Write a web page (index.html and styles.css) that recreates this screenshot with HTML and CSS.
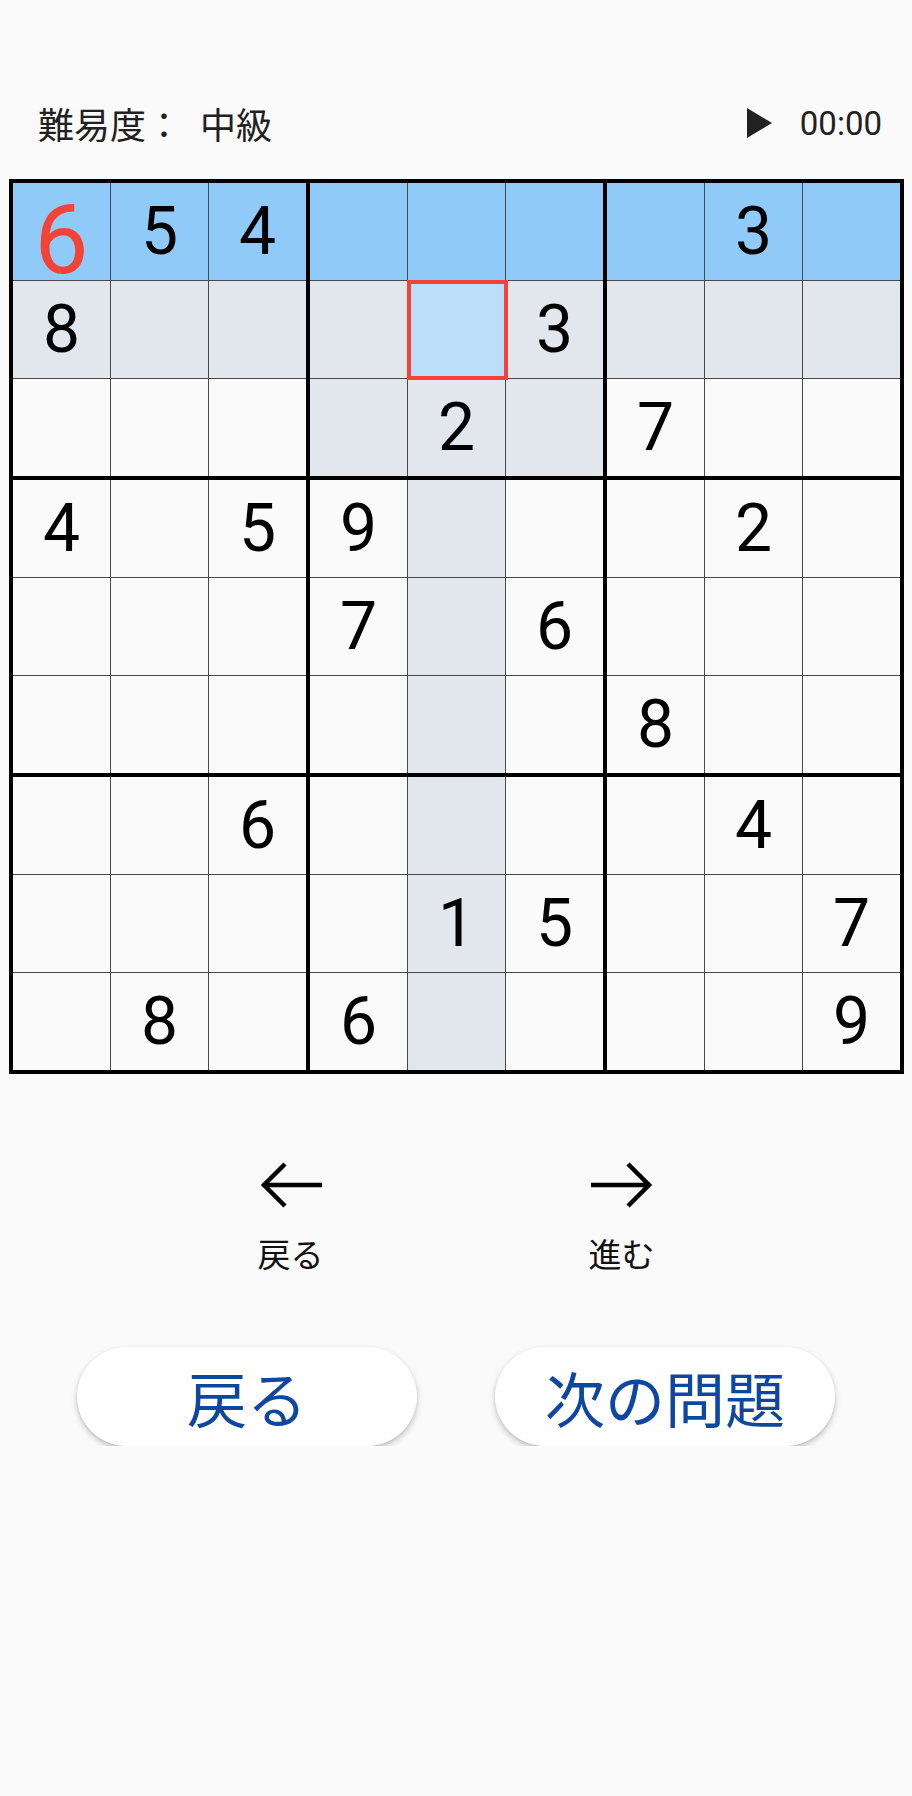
FILE: index.html
```html
<!DOCTYPE html>
<html lang="ja">
<head>
<meta charset="utf-8">
<title>数独</title>
<link rel="stylesheet" href="styles.css">
</head>
<body>
<div class="page">
  <header class="header">
    <div class="level"><span class="level-label">難易度：</span><span class="level-value">中級</span></div>
    <div class="timer">
      <svg class="play" width="25" height="30" viewBox="0 0 25 30"><polygon points="0,0 25,15 0,30" fill="#212121"/></svg>
      <span>00:00</span>
    </div>
  </header>

  <div class="board">
    <div class="box">
      <div class="cell blue"><span class="given-red">6</span></div>
      <div class="cell blue">5</div>
      <div class="cell blue">4</div>
      <div class="cell gray">8</div>
      <div class="cell gray"></div>
      <div class="cell gray"></div>
      <div class="cell"></div>
      <div class="cell"></div>
      <div class="cell"></div>
    </div>
    <div class="box">
      <div class="cell blue"></div>
      <div class="cell blue"></div>
      <div class="cell blue"></div>
      <div class="cell gray"></div>
      <div class="cell selected"></div>
      <div class="cell gray">3</div>
      <div class="cell gray"></div>
      <div class="cell gray">2</div>
      <div class="cell gray"></div>
    </div>
    <div class="box">
      <div class="cell blue"></div>
      <div class="cell blue">3</div>
      <div class="cell blue"></div>
      <div class="cell gray"></div>
      <div class="cell gray"></div>
      <div class="cell gray"></div>
      <div class="cell">7</div>
      <div class="cell"></div>
      <div class="cell"></div>
    </div>

    <div class="box">
      <div class="cell">4</div>
      <div class="cell"></div>
      <div class="cell">5</div>
      <div class="cell"></div>
      <div class="cell"></div>
      <div class="cell"></div>
      <div class="cell"></div>
      <div class="cell"></div>
      <div class="cell"></div>
    </div>
    <div class="box">
      <div class="cell">9</div>
      <div class="cell gray"></div>
      <div class="cell"></div>
      <div class="cell">7</div>
      <div class="cell gray"></div>
      <div class="cell">6</div>
      <div class="cell"></div>
      <div class="cell gray"></div>
      <div class="cell"></div>
    </div>
    <div class="box">
      <div class="cell"></div>
      <div class="cell">2</div>
      <div class="cell"></div>
      <div class="cell"></div>
      <div class="cell"></div>
      <div class="cell"></div>
      <div class="cell">8</div>
      <div class="cell"></div>
      <div class="cell"></div>
    </div>

    <div class="box">
      <div class="cell"></div>
      <div class="cell"></div>
      <div class="cell">6</div>
      <div class="cell"></div>
      <div class="cell"></div>
      <div class="cell"></div>
      <div class="cell"></div>
      <div class="cell">8</div>
      <div class="cell"></div>
    </div>
    <div class="box">
      <div class="cell"></div>
      <div class="cell gray"></div>
      <div class="cell"></div>
      <div class="cell"></div>
      <div class="cell gray">1</div>
      <div class="cell">5</div>
      <div class="cell">6</div>
      <div class="cell gray"></div>
      <div class="cell"></div>
    </div>
    <div class="box">
      <div class="cell"></div>
      <div class="cell">4</div>
      <div class="cell"></div>
      <div class="cell"></div>
      <div class="cell"></div>
      <div class="cell">7</div>
      <div class="cell"></div>
      <div class="cell"></div>
      <div class="cell">9</div>
    </div>
  </div>

  <nav class="nav">
    <div class="nav-item">
      <svg class="arrow" width="64" height="48" viewBox="0 0 64 48"><path d="M63 24H5M26 3L5 24l21 21" fill="none" stroke="#000" stroke-width="4.5"/></svg>
      <span class="nav-label">戻る</span>
    </div>
    <div class="nav-item">
      <svg class="arrow" width="64" height="48" viewBox="0 0 64 48"><path d="M1 24H59M38 3L59 24 38 45" fill="none" stroke="#000" stroke-width="4.5"/></svg>
      <span class="nav-label">進む</span>
    </div>
  </nav>

  <div class="actions">
    <button class="pill">戻る</button>
    <button class="pill">次の問題</button>
  </div>
</div>
</body>
</html>
```

FILE: styles.css
```css
html, body {
  margin: 0;
  padding: 0;
  background: #FAFAFA;
}

body {
  font-family: "Noto Sans CJK JP", "Noto Sans", sans-serif;
  color: #212121;
}

.page {
  width: 912px;
  padding-top: 93px;
}

.header {
  display: flex;
  align-items: center;
  justify-content: space-between;
  height: 60px;
  padding: 0 30px 0 38px;
}

.level {
  display: flex;
  align-items: center;
  font-size: 36px;
  line-height: 1;
}

.level-value {
  margin-left: 18px;
}

.timer {
  display: flex;
  align-items: center;
  gap: 28px;
  font-family: Roboto, "Noto Sans", sans-serif;
  font-size: 33px;
  line-height: 1;
}

.play {
  display: block;
}

.board {
  display: grid;
  grid-template-columns: repeat(3, 293px);
  grid-template-rows: repeat(3, 293px);
  gap: 4px;
  width: 887px;
  margin: 26px 0 0 9px;
  border: 4px solid #000;
  background: #000;
}

.box {
  display: grid;
  grid-template-columns: repeat(3, 97px);
  grid-template-rows: repeat(3, 97px);
  gap: 1px;
  background: #4a4a4a;
}

.cell {
  position: relative;
  display: flex;
  align-items: center;
  justify-content: center;
  background: #FAFAFA;
  font-family: Roboto, "Noto Sans", sans-serif;
  font-size: 66px;
  line-height: 1;
  color: #000;
}

.cell.blue {
  background: #90CAF9;
}

.cell.gray {
  background: #E2E6ED;
}

.cell.selected {
  background: #BBDEFB;
}

.cell.selected::after {
  content: "";
  position: absolute;
  top: -1px;
  left: -1px;
  right: -3px;
  bottom: -2px;
  border: 4px solid #F44336;
  z-index: 1;
}

.given-red {
  color: #F44336;
  font-size: 96px;
  padding-top: 16px;
}

.nav {
  display: flex;
  justify-content: center;
  gap: 211px;
  margin-top: 87px;
}

.nav-item {
  width: 120px;
  display: flex;
  flex-direction: column;
  align-items: center;
  gap: 25px;
}

.arrow {
  display: block;
}

.nav-label {
  font-size: 33px;
  line-height: 38px;
  color: #111;
}

.actions {
  display: flex;
  justify-content: center;
  gap: 78px;
  margin-top: 75px;
}

.pill {
  width: 340px;
  height: 99px;
  border: none;
  border-radius: 50px;
  background: #FFFFFF;
  box-shadow: 0 3px 6px rgba(0, 0, 0, 0.22), 0 1px 2px rgba(0, 0, 0, 0.08);
  font-family: "Noto Sans CJK JP", "Noto Sans", sans-serif;
  font-size: 60px;
  line-height: 1;
  color: #0D47A1;
  padding: 0;
  display: flex;
  align-items: center;
  justify-content: center;
}
```
